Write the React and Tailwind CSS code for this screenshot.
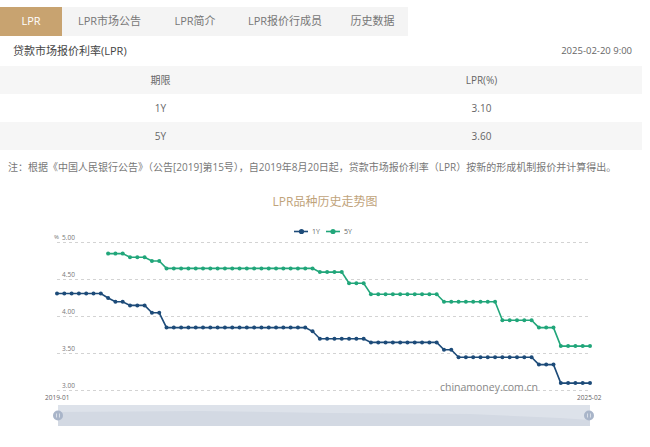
import React from 'react';

const tabs = [
    { label: 'LPR', w: 'w-[62px]', active: true },
    { label: 'LPR市场公告', w: 'w-[95px]' },
    { label: 'LPR简介', w: 'w-[76px]' },
    { label: 'LPR报价行成员', w: 'w-[104px]' },
    { label: '历史数据', w: 'w-[71px]' },
];

const runs = (list) => list.flatMap(([v, n]) => Array(n).fill(v));

const oneY = runs([
    [4.31, 7], [4.25, 1], [4.2, 2], [4.15, 3], [4.05, 2], [3.85, 20], [3.8, 1],
    [3.7, 7], [3.65, 10], [3.55, 2], [3.45, 11], [3.35, 3], [3.1, 5],
]);
const fiveY = runs([
    [null, 7], [4.85, 3], [4.8, 3], [4.75, 2], [4.65, 21], [4.6, 4], [4.45, 3],
    [4.3, 10], [4.2, 8], [3.95, 5], [3.85, 3], [3.6, 5],
]);

const X0 = 57;
const STEP = 533 / 73;
const px = (i) => X0 + i * STEP;
const py = (v) => 22.5 + (5 - v) * 74;

function Series({ data, color }) {
    const pts = data.map((v, i) => (v == null ? null : [px(i), py(v)])).filter(Boolean);
    return (
        <g>
            <polyline points={pts.map(p => p.join(',')).join(' ')} fill="none" stroke={color} strokeWidth="1.6" />
            {pts.map(([x, y], i) => (
                <circle key={i} cx={x} cy={y} r="2" fill={color} />
            ))}
        </g>
    );
}

function Chart() {
    const grid = [5, 4.5, 4, 3.5, 3];
    return (
        <svg width="650" height="227" className="block">
            {/* legend */}
            <line x1="294" y1="11.5" x2="308" y2="11.5" stroke="#1d4b79" strokeWidth="1.6" />
            <circle cx="301.5" cy="11.5" r="2.6" fill="#1d4b79" />
            <text x="312" y="14" fontSize="7" fill="#666">1Y</text>
            <line x1="326" y1="11.5" x2="340" y2="11.5" stroke="#21a67a" strokeWidth="1.6" />
            <circle cx="333" cy="11.5" r="2.6" fill="#21a67a" />
            <text x="344" y="14" fontSize="7" fill="#666">5Y</text>

            {/* grid */}
            <text x="54" y="19" fontSize="6" fill="#777">%</text>
            {grid.map(v => (
                <g key={v}>
                    <line x1="57" y1={py(v)} x2="590" y2={py(v)} stroke="#c8c8c8" strokeWidth="0.8" strokeDasharray="3 3" />
                    <text x="62" y={py(v) - 3} fontSize="6.5" fill="#777">{v.toFixed(2)}</text>
                </g>
            ))}

            <text x="538" y="171" fontSize="10.5" fill="#888" textAnchor="end">chinamoney.com.cn</text>

            <Series data={fiveY} color="#21a67a" />
            <Series data={oneY} color="#1d4b79" />

            {/* x axis labels */}
            <text x="45" y="180" fontSize="6.5" fill="#666">2019-01</text>
            <text x="577" y="180" fontSize="6.5" fill="#666">2025-02</text>

            {/* data zoom */}
            <rect x="58" y="185" width="532" height="21" fill="#dde2ea" />
            <path d="M58 192 L200 191 L330 193 L470 194 L560 198 L590 200 L590 206 L58 206 Z" fill="#d3d9e3" />
            <circle cx="58" cy="195.5" r="5" fill="#a9b5c9" />
            <line x1="56.5" y1="193.5" x2="56.5" y2="197.5" stroke="#e6eaf0" strokeWidth="0.8" />
            <line x1="59.5" y1="193.5" x2="59.5" y2="197.5" stroke="#e6eaf0" strokeWidth="0.8" />
            <circle cx="589" cy="195.5" r="5" fill="#a9b5c9" />
            <line x1="587.5" y1="193.5" x2="587.5" y2="197.5" stroke="#e6eaf0" strokeWidth="0.8" />
            <line x1="590.5" y1="193.5" x2="590.5" y2="197.5" stroke="#e6eaf0" strokeWidth="0.8" />
        </svg>
    );
}

export default function App() {
    return (
        <div className="w-[650px] h-[447px] overflow-hidden bg-white text-[#555] font-['Open_Sans','Noto_Sans_CJK_SC',sans-serif]">
            <div className="pt-[7px] flex">
                {tabs.map(t => (
                    <div
                        key={t.label}
                        className={`${t.w} h-[29px] flex items-center justify-center text-[11px] ${t.active ? 'bg-[#c8a370] text-white' : 'bg-[#f4f4f4] text-[#777]'}`}
                    >
                        {t.label}
                    </div>
                ))}
            </div>

            <div className="h-[30px] flex items-center justify-between pl-[13px] pr-[18px]">
                <span className="text-[11px] text-[#444]">贷款市场报价利率(LPR)</span>
                <span className="text-[9.5px] text-[#666]">2025-02-20 9:00</span>
            </div>

            <div className="w-[642px] text-[10px] text-[#666]">
                <div className="h-[28px] grid grid-cols-2 bg-[#f6f6f6] items-center text-center">
                    <span>期限</span>
                    <span>LPR(%)</span>
                </div>
                <div className="h-[28px] grid grid-cols-2 bg-white items-center text-center">
                    <span>1Y</span>
                    <span>3.10</span>
                </div>
                <div className="h-[28px] grid grid-cols-2 bg-[#f6f6f6] items-center text-center">
                    <span>5Y</span>
                    <span>3.60</span>
                </div>
            </div>

            <div className="h-[34px] flex items-center pl-[8px] text-[10px] text-[#777] whitespace-nowrap">
                注：根据《中国人民银行公告》（公告[2019]第15号），自2019年8月20日起，贷款市场报价利率（LPR）按新的形成机制报价并计算得出。
            </div>

            <div className="h-[36px] flex items-center justify-center text-[12px] text-[#bfa37a]">
                LPR品种历史走势图
            </div>

            <Chart />
        </div>
    );
}
